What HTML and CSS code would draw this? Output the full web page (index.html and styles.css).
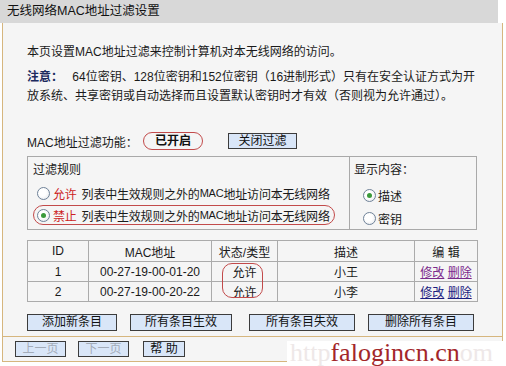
FILE: index.html
```html
<!DOCTYPE html>
<html lang="zh-CN">
<head>
    <meta charset="UTF-8">
    <title>无线网络MAC地址过滤设置</title>
    <link rel="stylesheet" href="styles.css">
</head>
<body>
    <div class="title">无线网络MAC地址过滤设置</div>

    <div class="main">
        <p class="intro">本页设置MAC地址过滤来控制计算机对本无线网络的访问。</p>
        <p class="note"><b>注意：</b> 64位密钥、128位密钥和152位密钥（16进制形式）只有在安全认证方式为开<br>放系统、共享密钥或自动选择而且设置默认密钥时才有效（否则视为允许通过）。</p>

        <div class="switch-row">
            <span class="label">MAC地址过滤功能：</span>
            <span class="state">已开启</span>
            <button class="btn btn-switch">关闭过滤</button>
        </div>

        <div class="rules">
            <div class="rules-left">
                <div class="box-title">过滤规则</div>
                <div class="opt"><span class="radio"></span><span class="red">允许</span>列表中生效规则之外的<span class="mac">MAC</span>地址访问本无线网络</div>
                <div class="opt marked"><span class="radio on"></span><span class="red">禁止</span>列表中生效规则之外的<span class="mac">MAC</span>地址访问本无线网络</div>
            </div>
            <div class="rules-right">
                <div class="box-title">显示内容：</div>
                <div class="show-opt first"><span class="radio on"></span>描述</div>
                <div class="show-opt"><span class="radio"></span>密钥</div>
            </div>
        </div>

        <div class="list-wrap">
            <table class="list">
                <colgroup>
                    <col style="width:61px">
                    <col style="width:123px">
                    <col style="width:66px">
                    <col style="width:137px">
                    <col style="width:63px">
                </colgroup>
                <tr>
                    <th>ID</th>
                    <th>MAC地址</th>
                    <th>状态/类型</th>
                    <th>描述</th>
                    <th>编 辑</th>
                </tr>
                <tr>
                    <td>1</td>
                    <td>00-27-19-00-01-20</td>
                    <td>允许</td>
                    <td>小王</td>
                    <td><a href="#" class="visited">修改</a> <a href="#" class="visited">删除</a></td>
                </tr>
                <tr>
                    <td>2</td>
                    <td>00-27-19-00-20-22</td>
                    <td>允许</td>
                    <td>小李</td>
                    <td><a href="#">修改</a> <a href="#">删除</a></td>
                </tr>
            </table>
            <span class="status-mark"></span>
        </div>

        <div class="actions">
            <button class="btn btn-big">添加新条目</button>
            <button class="btn btn-big">所有条目生效</button>
            <button class="btn btn-big wide">所有条目失效</button>
            <button class="btn btn-big wide">删除所有条目</button>
        </div>
    </div>

    <div class="foot">
        <button class="btn btn-nav" disabled>上一页</button>
        <button class="btn btn-nav" disabled>下一页</button>
        <button class="btn btn-nav help">帮 助</button>
    </div>

    <div class="watermark"><span class="fade">http</span><span class="site">falogincn.cn</span><span class="fade">om</span></div>
</body>
</html>
```

FILE: styles.css
```css
body {
    margin: 0;
    font-family: "Liberation Sans", "Noto Sans CJK SC", sans-serif;
    font-size: 12px;
    color: #1a1a1a;
    background: #fff;
    position: relative;
    width: 506px;
    height: 366px;
    overflow: hidden;
}

.title {
    width: 498px;
    height: 23px;
    line-height: 23px;
    padding-left: 7px;
    box-sizing: border-box;
    background: #d8d8d8;
    color: #111;
    font-size: 12.5px;
}

.main {
    margin-left: 2px;
    width: 501px;
    height: 313px;
    box-sizing: border-box;
    padding: 20px 0 0 24px;
    border-left: 1px solid #d6b67e;
    border-right: 1px solid #d6b67e;
    background: #f5f5f5;
}

.intro {
    margin: 0;
    line-height: 18px;
}

.note {
    margin: 7px 0 0;
    line-height: 19px;
    white-space: nowrap;
}

.note b {
    color: #1b2a5e;
    margin-right: 6px;
}

.switch-row {
    display: flex;
    align-items: center;
    height: 18px;
    margin-top: 26px;
}

.switch-row .label {
    width: 116px;
}

.state {
    width: 60px;
    height: 18px;
    box-sizing: border-box;
    border: 1px solid #c24a4a;
    border-radius: 10px;
    line-height: 16px;
    text-align: center;
    font-weight: bold;
    color: #111;
}

.btn {
    font-family: inherit;
    font-size: 12px;
    height: 16px;
    box-sizing: border-box;
    padding: 0;
    line-height: 14px;
    background: #d9e6f8;
    border: 1px solid #3c3c3c;
    color: #111;
}

.btn-switch {
    width: 69px;
    margin-left: 25px;
}

/* filter rule box */
.rules {
    display: flex;
    margin-top: 6px;
    width: 450px;
    height: 74px;
    box-sizing: border-box;
    border: 1px solid #a9a9a9;
}

.rules-left {
    width: 322px;
    box-sizing: border-box;
    border-right: 1px solid #a9a9a9;
    padding: 4px 0 0 5px;
}

.rules-right {
    flex: 1;
    padding: 4px 0 0 4px;
}

.box-title {
    line-height: 18px;
}

.opt {
    display: flex;
    align-items: center;
    width: 302px;
    height: 20px;
    box-sizing: border-box;
    padding-left: 3px;
    margin-top: 4px;
    border: 1px solid transparent;
    border-radius: 10px;
    white-space: nowrap;
    letter-spacing: -0.2px;
}

.opt.marked {
    margin-top: 2px;
    border-color: #c24a4a;
}

.mac {
    font-size: 11px;
}

.red {
    color: #cc2222;
    margin-right: 5px;
}

.radio {
    display: inline-block;
    position: relative;
    width: 13px;
    height: 13px;
    box-sizing: border-box;
    border: 1px solid #6f8298;
    border-radius: 50%;
    background: radial-gradient(circle at 40% 40%, #fff 40%, #dfe3e8 100%);
    margin-right: 3px;
}

.radio.on::after {
    content: "";
    position: absolute;
    left: 3px;
    top: 3px;
    width: 5px;
    height: 5px;
    border-radius: 50%;
    background: #3b9a3b;
}

.show-opt {
    display: flex;
    align-items: center;
    height: 18px;
    margin-top: 5px;
    padding-left: 9px;
}

.show-opt.first {
    margin-top: 7px;
}

.show-opt .radio {
    margin-right: 2px;
}

/* entry list */
.list-wrap {
    position: relative;
    margin-top: 10px;
    width: 450px;
}

.list {
    width: 450px;
    border-collapse: collapse;
    table-layout: fixed;
}

.list th,
.list td {
    border: 1px solid #ababab;
    padding: 0;
    text-align: center;
    font-weight: normal;
    white-space: nowrap;
}

.list th {
    height: 20px;
}

.list td {
    height: 19px;
}

.list a {
    color: #1c1c80;
}

.list a.visited {
    color: #7b2a8c;
}

.status-mark {
    position: absolute;
    left: 195px;
    top: 23px;
    width: 41px;
    height: 35px;
    box-sizing: border-box;
    border: 1px solid #c24a4a;
    border-radius: 10px;
}

.actions {
    display: flex;
    gap: 13px;
    margin-top: 12px;
}

.btn-big {
    height: 17px;
    line-height: 15px;
    padding: 0 14px;
    font-size: 12px;
}

.btn-big.wide {
    padding: 0 16px;
}

.actions .wide:nth-child(3) {
    margin-left: 4px;
}

/* bottom bar */
.foot {
    display: flex;
    gap: 12px;
    margin-left: 2px;
    width: 501px;
    height: 26px;
    box-sizing: border-box;
    padding: 4px 0 0 12px;
    border: 1px solid #d6b67e;
    background: #f5f5f5;
}

.btn-nav {
    width: 51px;
}

.btn-nav:disabled {
    color: #a3acb9;
}

.btn-nav.help {
    width: 42px;
    margin-left: 2px;
}

.watermark {
    position: absolute;
    left: 287px;
    top: 341px;
    width: 219px;
    height: 25px;
    padding-left: 3px;
    box-sizing: border-box;
    background: #fff;
    font-family: "Liberation Serif", serif;
    font-size: 26px;
    line-height: 24px;
    white-space: nowrap;
}

.watermark .fade {
    color: #eee8e8;
}

.watermark .site {
    color: #a3262a;
}
```
